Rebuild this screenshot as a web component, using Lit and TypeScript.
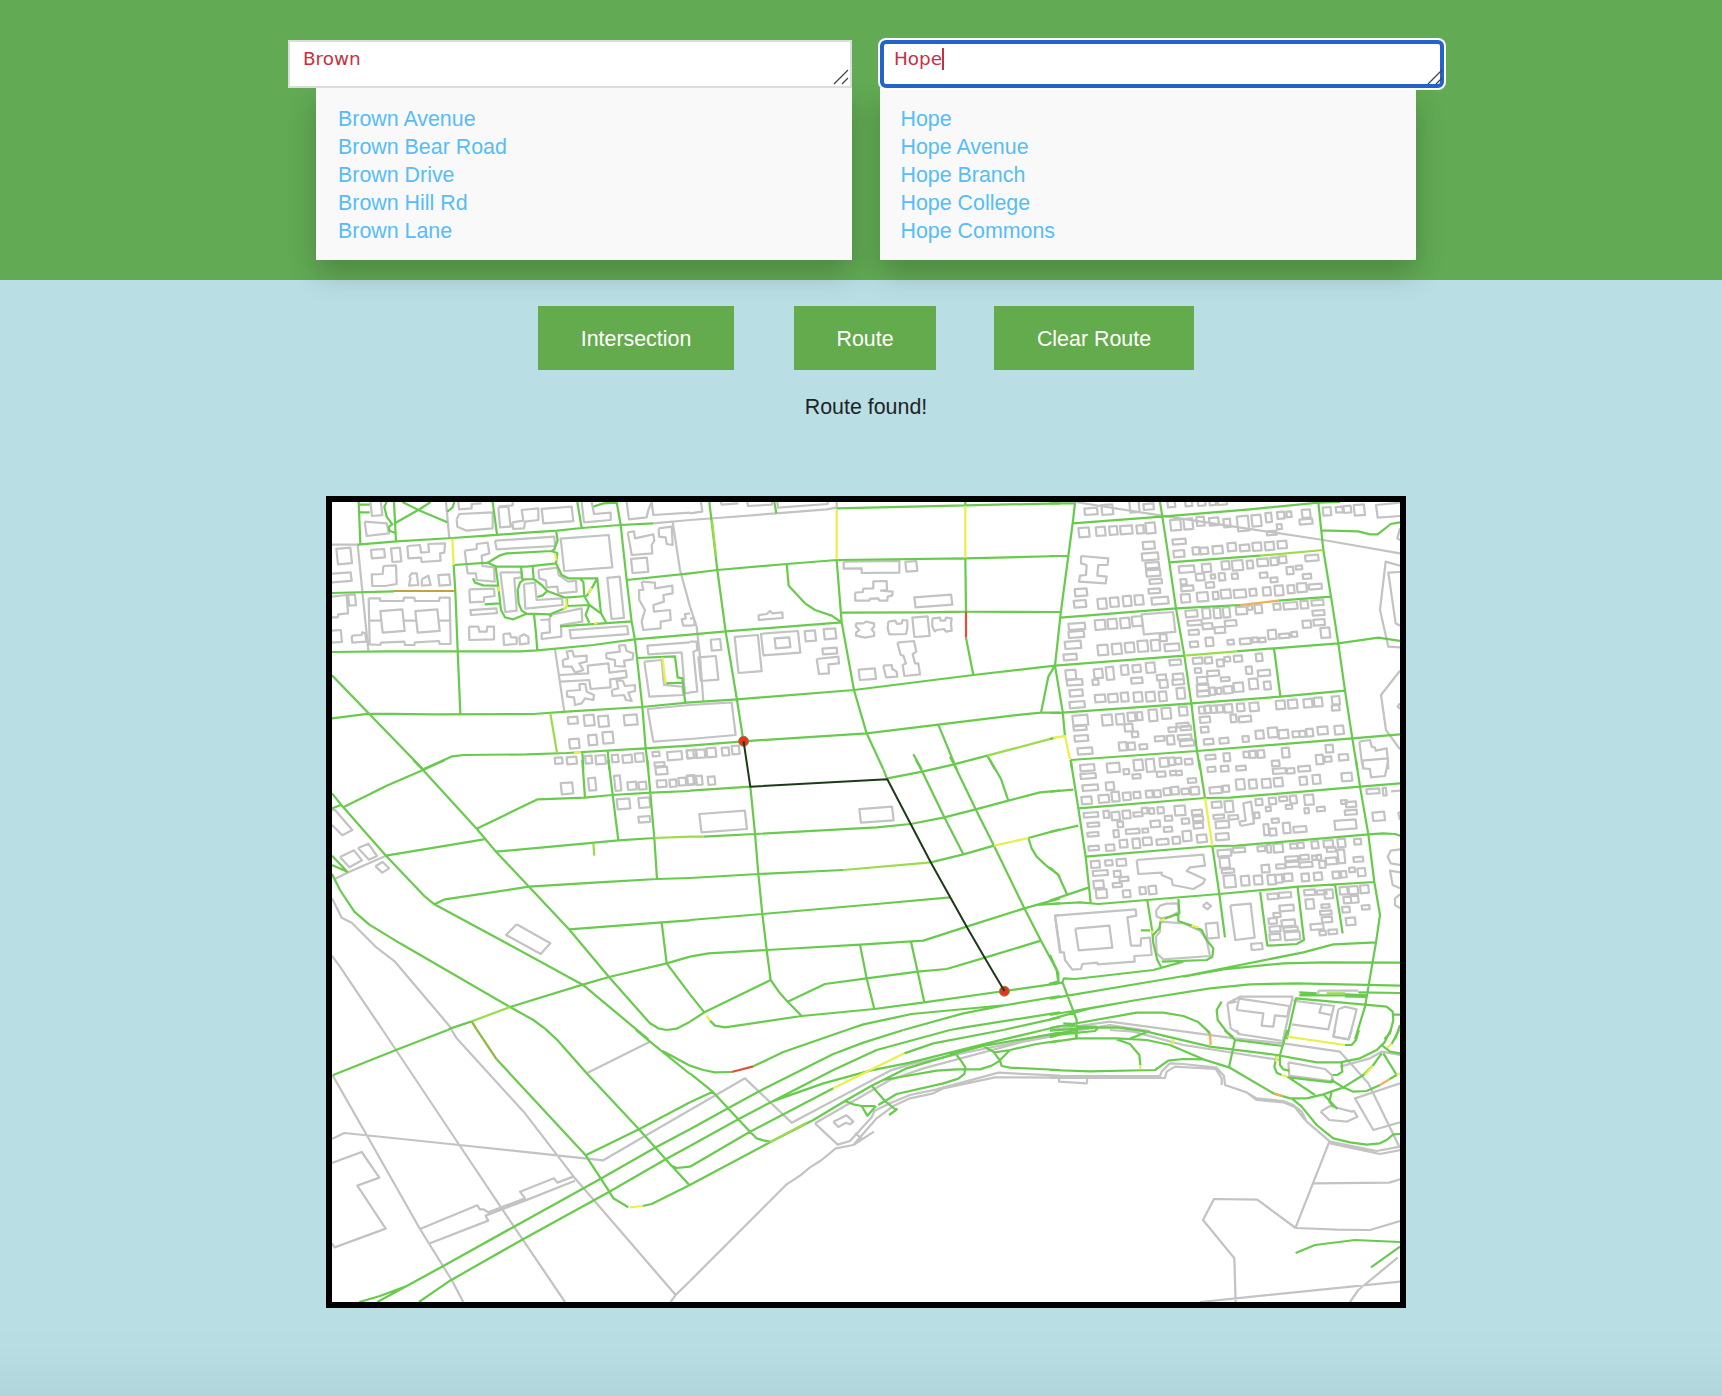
import { LitElement, html, svg, css } from "lit";
import { customElement, property } from "lit/decorators.js";

interface Tile {
  x: number;
  y: number;
  grey: string;
  boxes: string;
  green: string;
  lime?: string;
  yellow?: string;
  orange?: string;
  brown?: string;
  red?: string;
  olive?: string;
}

/* Map tiles. Coordinates inside a tile are in thirds of a pixel.
   Lines are point lists separated by ";", boxes are "x y w h" separated by ";". */
const TILES: Tile[] = [
  {
    x: 320, y: 490,
    green: `116,36 121,160;116,44 149,44;116,67 149,67;113,164 230,154 397,144 500,137 620,128 712,122 785,114 900,105 1000,100;
200,36 193,50 200,80 217,103 207,110 208,122 228,130;222,36 228,154;247,36 300,62 382,97;332,36 300,57 222,101;403,36 398,52 382,65;
401,225 406,304 413,482 421,670;36,309 222,304;36,486 200,484 413,484 600,484 652,481 820,465 943,448 1110,434;36,556 148,672 309,838;
36,685 148,671 340,673 640,672 740,665 965,651 1110,637;309,838 397,799 430,795 620,793 740,789 975,775 1110,767;518,36 531,133;772,36 785,114;
820,50 850,40 890,38;890,36 902,105 920,270 935,395 945,450 967,650 977,775 985,838;920,270 1110,250;
708,122 713,150 703,178 695,183 560,190 540,196 503,218 530,230 620,230 708,220 712,190 695,183;401,225 503,218;
708,220 725,255 745,265 832,265 815,295 800,318 735,323;832,267 843,370 858,397;720,409 935,394;780,267 790,275 793,318 808,345 843,370;
808,345 797,375 808,398;740,323 742,348 808,345;459,265 465,278 490,286 533,287;
527,230 535,290 543,360 555,382 580,388 620,371 690,373 735,355 742,345;494,343 538,340;603,230 607,268;638,230 641,267;
620,371 605,362 596,340 593,300 600,278 612,268 641,267 665,285 682,303 735,323;682,303 668,316 652,321;642,373 648,430 652,481;690,373 695,380;
953,504 1065,499 1073,562 1087,565 1096,640;1037,580 1087,578;787,785 790,838;863,783 868,838`,
    lime: `691,670 711,788`,
    yellow: `397,146 401,225;762,787 783,787;822,400 832,400;1027,502 1037,580;705,190 709,212;815,295 806,312;738,326 740,348 730,357;536,290 538,304`,
    brown: `222,303 405,303`,
    grey: `36,164 113,164 145,482;378,36 388,146;1058,95 1080,240 1110,350;1000,100 1110,90;705,478 733,665;
134,95 200,100 207,130 140,138 134,95;262,168 300,165 303,188 327,186 325,162 375,160 373,188 360,190 362,212 305,216 303,203 265,205 262,168;
190,228 228,226 230,282 195,288 157,288 155,253 188,252 190,228;267,262 275,250 290,250 295,285 267,287 272,262;305,268 325,257 332,285 306,287 305,268;
146,325 180,325 181,333 250,333 252,323 283,323 285,333 357,333 359,323 389,323 392,462 359,462 357,453 285,457 283,465 255,465 253,455 183,458 181,465 149,463 146,325;
150,392 181,392;254,392 286,392;359,392 390,392;36,320 80,315 84,370 55,373 53,382 36,382;95,437 125,435 127,427 136,430 139,455 97,458 95,437;
434,182 470,177 470,162 503,158 508,190 485,197 487,228 522,232 524,275 470,270 468,250 443,250 434,182;
448,298 522,296 524,318 492,322 492,335 450,337 448,298;447,410 475,410 478,425 500,425 502,410 522,410 522,448 448,450 447,410;
550,432 570,430 573,442 590,442 590,462 552,465 550,432;598,440 612,433 625,440 626,460 600,463 598,440;
541,247 605,247 605,262 583,265 590,362 556,366 541,247;612,282 645,278 650,330 726,325 728,345 616,356 612,282;
655,240 712,233 716,255 745,275 768,272 770,305 715,310 712,290 680,292 678,272 658,265 655,240;
661,390 690,388 690,375 785,355 787,395 723,405 724,440 665,447 665,430 690,427 688,390;525,152 703,140 705,168 530,178 525,152;
410,88 418,72 518,67 518,115 440,122 412,110 410,88;415,36 417,58 455,55 455,42 485,40;535,52 565,50 572,110 540,112 535,52;
577,97 610,92 605,60 655,55 655,90 615,95 612,115 580,117 577,97;785,36 792,97 872,90 872,68 822,72 815,36;
920,36 927,88 980,82 985,60 995,36 1000,75 1110,68;535,50 578,46 578,36;
923,127 942,124 945,145 1000,133 1003,152 995,165 997,190 935,195 930,165 923,127;1016,115 1055,110 1058,165 1040,162 1037,142 1017,140 1016,115;
965,275 1005,278 1005,295 1057,287 1058,310 1030,315 1032,335 1000,345 1002,365 1050,360 1052,390 1022,395 1022,415 970,420 965,395 975,360 958,330 957,300 970,300 965,275;
1110,370 1095,372 1097,385 1085,388 1090,407 1110,407;
728,510 745,505 740,485 757,482 762,500 800,497 800,515 778,520 790,540 765,548 755,530 730,530 728,510;
858,490 900,485 897,467 915,465 920,483 940,490 938,508 912,512 915,530 885,528 885,510 860,505 858,490;
740,603 780,600 778,582 796,582 800,605 822,615 820,630 795,625 785,640 765,645 762,622 742,620 740,603;
875,600 895,595 890,572 908,572 915,588 945,585 945,603 925,608 935,633 918,630 912,615 878,618 875,600;
720,555 805,550 803,527 865,520 868,548 918,542 920,562 870,568 872,592 812,597 808,570 722,575;1110,457 982,467 985,493 1085,487 1095,610 1110,608;
973,515 1025,510 1032,585 1087,590 1090,615 988,620 973,515;1110,645 983,657 1000,755 1110,747`,
    boxes: `49 173 47 50;30 247 65 30;153 177 42 28;213 173 31 43;355 253 36 34;151 30 36 48;722 135 155 108;862 260 50 127;933 203 52 46;743 680 31 22;791 674 33 34;834 677 33 34;911 673 42 33;747 746 32 30;804 734 28 32;847 725 34 36;704 802 24 20;740 800 31 23;795 797 22 24;826 795 32 28;875 794 21 23;907 794 30 25;944 789 28 27;997 785 22 14;1041 783 46 28;1100 779 30 26;181 358 73 70;286 358 73 70;30 420 36 38;451 355 80 20;84 313 24 34;665 50 95 50;749 408 176 37;1003 816 31 14`,
  },
  {
    x: 690, y: 490,
    green: `58,36 82,240 107,425 141,630 160,752;0,250 82,240 290,222 440,210 826,205 1110,198;253,36 259,70;440,55 826,46 1110,40;826,36 826,46;
440,210 455,397 492,600 530,730 580,838;290,222 296,287 345,340 375,360 425,377 455,397;455,368 700,367 826,365 1110,366;826,205 828,365;828,443 850,555;
0,434 107,424 455,397;0,637 141,628 492,600 850,555 1095,527;0,767 160,754 530,730 745,704 1000,673 1053,668 1110,668;1095,527 1075,560 1053,668;
745,704 800,838;670,793 695,838;792,823 892,797;892,797 915,838`,
    lime: `66,90 78,200;892,797 1095,743`,
    yellow: `440,58 440,208;826,47 826,203;1095,743 1125,738`,
    red: `828,365 828,443`,
    grey: `0,90 82,84 259,70 410,58 440,53 440,36;0,350 20,410 30,500 40,635;461,215 628,213 628,248 515,249 515,235 461,236 461,215;
205,375 230,372 240,363 247,370 277,367 278,384 207,390 205,375;380,507 445,500 447,520 415,523 417,550 387,552 380,507;
495,308 518,306 520,296 550,295 550,274 590,273 591,300 573,302 608,305 607,316 593,320 592,332 568,332 565,325 540,326 538,332 496,332 495,308;
497,400 520,400 528,395 552,400 552,410 545,418 553,428 552,438 525,443 498,437 498,428 508,420 498,410 497,400;
595,395 615,392 622,402 635,400 638,390 652,392 652,415 648,432 598,433 593,415 595,395;
727,385 750,383 752,392 765,392 768,383 785,385 783,400 785,422 768,425 762,417 740,420 735,424 727,410 727,385;
622,458 672,453 679,485 668,492 675,520 685,520 690,553 643,558 638,525 648,520 640,497 632,495 622,458;580,527 605,525 607,537 620,545 622,560 588,562 580,527;
0,645 125,637 137,735 0,747;92,36 95,44 145,40;172,36 174,48 246,44 246,36;262,36 264,53 413,42 413,36;0,70 37,65 33,36;0,455 20,455 22,480 10,485 22,605 0,607;0,385 12,385 14,405 0,407`,
    boxes: `646 213 36 32;673 314 114 38;667 379 52 62;62 447 32 35;134 435 81 114;254 442 47 33;344 421 34 33;401 415 38 33;397 473 45 20;506 535 52 35;213 423 118 73;25 498 60 75;-10 780 22 25;18 778 28 26;49 773 30 29;95 772 23 25;125 767 24 26`,
  },
  {
    x: 1050, y: 490,
    green: `0,40 75,40 68,100 55,198 32,370 15,527 38,665 45,740;62,810 66,838;68,100 335,80 600,58 805,38 870,36;0,198 55,198;0,366 32,366;
330,36 337,80 358,217 378,355 403,497 424,640 441,783 450,838;358,217 630,197;32,383 378,355 570,345;685,332 843,320;
805,38 820,180 843,320 865,460 885,602 907,745 922,838;15,527 403,497;560,484 672,475 865,460 985,443 1050,453;
815,121 925,124 960,133 983,133 1022,102 1050,97;672,475 691,618;0,669 38,668 424,640 691,620 885,602;0,748 10,744;62,810 441,783 907,745 1050,733`,
    lime: `630,197 820,180;403,497 560,484`,
    yellow: `10,744 45,738 60,808`,
    orange: `570,345 685,332`,
    grey: `75,36 335,77 820,150 1050,190;1050,227 1007,215 990,360 1015,470 1050,472;1050,246 1015,248 1037,400 1050,407;1050,542 993,615 1008,720 1050,778;1050,115 1042,145 1050,150;1050,38 978,45 983,83 1050,78;1050,640 1043,650 1050,657;
93,198 175,205 173,225 145,225 142,257 170,260 167,280 87,275 90,257 108,255 110,225 93,220 93,198;928,755 960,750 965,770 975,773 977,782 1010,775 1013,805 935,812 928,755;935,812 940,838;1013,805 1015,838`,
    boxes: `103 53 40 22;154 43 36 32;237 26 32 42;280 40 32 20;352 32 24 20;405 30 22 19;443 30 24 18;478 30 20 16;503 30 28 15;85 112 34 30;137 110 30 28;177 108 26 27;210 106 38 27;259 105 23 26;286 97 31 34;360 88 34 34;400 85 30 34;439 80 25 28;477 82 30 25;520 86 22 26;560 77 38 47;604 74 31 36;646 68 20 29;681 65 23 22;709 64 16 18;755 58 27 26;748 86 40 18;680 102 16 16;650 122 30 14;818 51 26 26;857 50 22 18;880 47 24 22;911 43 34 34;
278 154 37 24;275 187 51 25;286 216 42 20;288 238 44 22;298 266 38 16;295 295 36 16;74 295 38 24;71 330 38 23;142 325 29 32;179 322 28 29;218 317 27 32;253 315 28 30;304 320 52 24;367 146 41 18;370 180 34 22;427 171 22 23;450 172 25 21;487 167 32 25;532 158 27 26;569 163 30 21;607 157 28 26;644 155 29 26;682 152 29 24;
386 226 48 23;455 221 29 26;514 213 25 26;545 210 35 32;590 211 20 25;621 205 34 24;661 202 23 24;686 198 24 22;765 194 41 20;391 267 19 17;393 286 38 18;437 250 27 22;482 253 14 13;506 249 20 23;467 276 26 18;545 250 19 17;629 247 24 17;661 262 22 15;709 230 22 23;737 226 20 13;758 251 26 16;392 312 29 26;440 306 35 29;488 305 18 23;512 298 31 28;551 298 38 26;598 296 22 22;638 291 25 26;673 286 28 31;712 285 22 25;740 279 31 28;776 281 40 18;
406 360 37 22;456 354 26 32;490 353 23 32;518 351 23 32;557 349 35 25;592 346 15 14;613 343 24 27;670 340 22 20;700 336 43 23;751 332 24 24;784 329 37 18;787 360 37 17;790 387 35 20;757 391 27 23;811 412 30 32;412 390 44 17;416 419 31 16;457 399 31 19;493 410 33 20;524 390 36 19;419 454 26 18;466 442 25 27;532 449 20 15;569 444 34 19;607 442 17 15;627 443 20 14;653 419 27 29;687 430 32 15;724 425 18 16;275 366 101 67;
55 398 51 22;55 422 48 22;44 452 50 25;40 491 41 20;134 389 33 31;172 386 30 31;210 383 30 32;245 378 33 31;142 464 33 32;185 460 31 33;224 457 30 31;262 451 33 35;302 449 29 34;343 460 46 24;329 432 22 22;46 539 33 30;50 567 48 20;58 598 41 22;58 633 47 22;131 536 28 29;167 530 26 40;127 568 19 17;212 525 24 30;247 524 26 23;287 517 29 32;358 508 36 18;243 562 35 19;320 553 29 18;328 569 26 25;368 550 33 20;367 567 36 18;379 593 27 34;134 613 33 24;174 611 30 26;212 607 24 28;250 606 28 30;287 605 29 30;326 604 25 30;
428 502 30 20;464 501 23 20;500 508 22 22;523 500 18 15;551 496 26 20;617 490 21 24;434 534 20 15;471 541 37 18;587 529 20 23;623 539 38 20;440 560 33 22;512 561 27 13;440 583 37 20;441 602 37 18;478 592 18 23;499 593 16 19;520 588 28 23;550 577 31 29;596 565 29 33;641 574 22 25;
67 674 48 33;70 706 40 16;73 735 42 20;82 772 46 22;155 673 33 34;197 671 27 33;232 667 25 27;260 666 18 25;295 658 28 36;334 653 30 34;386 649 27 28;223 701 26 24;245 724 20 18;355 711 24 15;379 698 38 14;391 707 33 14;206 756 25 26;233 757 23 23;268 762 24 16;314 738 30 16;350 736 24 28;383 733 42 16;389 750 44 19;
446 649 18 22;464 646 18 24;482 646 18 23;500 645 20 23;522 642 26 26;560 640 24 24;598 637 29 27;677 631 29 27;713 628 30 28;760 626 28 27;791 622 27 28;845 618 25 26;845 645 24 17;449 679 32 20;452 710 24 18;541 673 19 24;566 677 38 20;461 746 30 18;508 743 28 18;577 738 20 18;616 721 26 26;653 712 31 31;685 719 31 27;727 723 22 19;747 722 20 19;768 716 22 24;802 709 32 25;853 706 29 28;
466 794 31 15;520 789 21 25;580 784 18 19;598 782 20 22;622 780 22 24;695 773 24 30;665 811 24 18;797 794 24 29;823 799 22 17;826 764 24 24;866 792 29 20;250 808 30 34;287 806 28 40;328 803 28 28;355 802 20 24;375 803 20 20;404 806 24 18`,
  },
  {
    x: 320, y: 760,
    green: `375,0 309,30 200,77 70,142;280,0 309,30 470,206 528,275 627,380 747,508 867,651 990,790 1015,805 1040,810 1070,806 1110,785;
36,100 70,142 198,287 315,410 343,433 560,550 788,674 985,838;36,145 62,135;470,206 653,118 795,113 875,105 995,98 1110,93;198,287 492,238;
528,275 800,250 895,241 1003,234;787,0 795,113;865,0 895,241;982,0 1003,234 1011,357;343,433 375,418 627,380 835,367 1011,357 1110,354;
747,508 1025,487 1110,481;1025,487 1040,610 1110,703;36,342 60,390 103,455 148,494 240,550 570,741 640,780 675,806;
383,810 390,806 455,784;570,741 788,674 867,651 1040,610 1110,590;36,287 82,335 36,315`,
    lime: `1003,234 1110,230;820,250 823,287;455,784 570,741`,
    olive: `455,784 470,808`,
    grey: `45,357 82,338 198,287;36,415 65,473 95,488 170,563 225,605 390,800 395,810;36,588 60,620 100,680 188,810;36,195 67,226 97,210 45,150 36,150;
60,291 102,271 126,301 88,322 60,291;114,264 145,251 171,288 147,299 114,264;166,319 188,306 207,325 187,338 166,319;590,493 691,550 662,582 558,525 590,493`,
    boxes: `722 67 38 36;804 53 25 39;882 46 22 47;922 65 28 25;955 65 25 24;890 115 41 33;955 112 36 32;955 168 36 20;1006 20 37 24;1010 60 30 22;1048 58 22 23;1075 53 24 24;1101 45 25 30`,
  },
  {
    x: 690, y: 760,
    green: `0,92 181,80 195,220 205,342 217,462 230,570 242,660 270,700 293,725 335,768;580,28 592,58;592,55 697,35 792,13;678,0 697,35 763,172 820,283;
792,13 857,148 912,257 1003,445 1053,542 1100,630 1105,668;780,-10 792,13;900,0 933,57 955,122;40,230 195,222 560,202 662,192 763,172 857,148 955,122 1050,97 1110,92;
0,354 205,342 460,330;722,307 820,283 912,257;1015,234 1110,208;1015,234 1025,265 1040,290 1070,318 1100,340 1110,350;0,480 217,462 560,432 780,412;
0,590 55,580 230,570 510,554 700,542 830,500 1003,445 1110,415;1040,435 1110,430;510,554 530,655 553,747;663,545 683,635 703,727;
293,725 405,672 530,655 683,635 770,627 885,593 1053,542;242,660 43,757 0,785;0,703 43,757;60,782 75,797 105,802 335,768 553,747 703,727 943,693 1105,670;
470,810 520,793 665,762 950,735 1110,708;640,810 820,760 950,735;780,810 820,803 1110,757;940,810 1110,772;1060,810 1110,798`,
    lime: `0,230 40,230;460,330 722,307`,
    yellow: `912,257 1015,234;50,768 60,782`,
    grey: `1110,465 1095,467 1110,580`,
    boxes: `-10 47 22 27;18 47 20 28;53 49 23 26;28 152 143 65;508 140 103 48`,
  },
  {
    x: 1050, y: 760,
    green: `62,0 85,145 107,290 122,428;0,95 70,89;85,145 465,114 540,113 930,80 1050,70;0,216 85,197;107,290 487,258 560,257 955,223 1000,220 1035,222 1050,227;
447,0 465,114;487,258 508,402 525,532;918,0 930,80 955,223 973,366 990,465 978,547 945,740 915,838;0,432 90,427 145,432 508,402 745,380 973,366;
0,323 25,345 52,405;0,422 115,383;292,422 307,515 310,550 322,600 333,620;273,511 300,511;385,413 388,460 333,480 328,505 310,525;
385,460 385,483 425,497 455,510 470,540 490,565 487,590 470,600 335,605;630,392 652,557 740,552 762,540 743,382;855,373 878,520;
0,585 25,640 25,665 12,668 0,671 36,668 42,655 75,657 310,630 400,605;38,668 80,780 80,838;
0,716 420,645 760,577 850,553 978,547;400,650 520,628 700,610 820,607 1050,608;0,765 260,720 480,685 600,673 740,670 1050,677;0,778 120,745 260,720;
0,804 260,758 340,758 400,768 443,785 478,817;515,725 500,750 503,780 530,815 550,832;710,838 738,715 1010,740 1028,755 1030,780 1020,820 1003,838;
748,697 800,700;748,706 950,706;750,701 800,703;885,703 950,706;885,709 950,711;925,697 1050,699;1028,764 1050,764;1050,795 1035,838;
40,790 75,792;40,797 75,797;0,812 130,803 200,802 290,815;80,800 138,800 142,806 135,813 60,820 0,828;240,836 290,817`,
    yellow: `465,114 487,258;425,497 445,502;303,512 310,520;330,482 345,477`,
    lime: `830,700 885,700`,
    orange: `480,818 480,838`,
    grey: `0,810 180,785 560,836;0,823 60,815 180,795 300,813;260,300 460,284 465,317 420,322 410,333 465,358 460,370 430,387 368,375 365,358 335,345 335,338 265,342 260,300;
15,467 257,448 259,467 232,472 243,557 272,557 273,535 300,533 305,585 253,588 254,605 143,613 142,608 97,612 93,627 67,629 45,600 42,577 32,577 15,467;
76,506 178,497 187,563 86,571 76,506;318,452 330,437 350,431 383,430 387,455 360,470 335,475 320,470 318,452;
330,485 400,490 450,512 470,540 480,588 340,598 320,580 318,530 330,515 330,485;541,436 602,431 614,533 556,540 541,436;458,438 470,428 483,438 473,448 458,438;
532,730 570,710 728,710 700,838;532,730 542,805 570,822;532,730 560,725;560,750 567,716 718,738 712,770 675,766 670,800 635,797 640,760 560,750;
730,722 852,738 835,808 725,793;815,735 808,758 845,765;865,748 885,740 920,748 897,838 850,830 865,748;937,0 940,25 960,27 963,52 1005,48 1015,0;
805,692 925,692;805,692 805,702;1050,268 1022,272 1013,290 1022,310 1050,315;1050,337 1020,332 1028,375 1050,385;1050,403 1035,415 1035,435 1050,445;
572,198 568,185 587,182 580,130 603,125 612,190 572,198;1023,94 1050,92;1050,155 1045,160 1050,180`,
    boxes: `90 12 44 22;91 39 47 18;97 73 48 20;167 66 26 25;94 109 32 24;145 104 33 25;184 95 25 30;218 97 25 24;250 95 22 20;287 91 22 22;311 90 22 22;340 84 22 22;363 80 24 24;394 85 24 18;421 80 27 24;413 54 26 15;170 8 40 30;220 27 18 16;247 42 25 14;320 34 27 17;360 32 19 14;378 32 18 14;472 20 25 16;512 17 24 18;558 17 30 15;478 80 38 21;518 76 20 20;557 57 28 32;596 58 25 28;635 56 28 28;671 53 28 27;668 24 40 18;710 24 24 17;744 17 37 18;748 50 24 25;787 44 25 28;874 38 33 26;949 85 40 17;998 83 12 24;967 155 38 28;
101 156 44 17;112 187 36 14;112 216 34 14;115 257 32 15;160 152 18 22;184 155 26 26;217 151 25 25;250 156 28 14;275 143 18 18;297 144 16 18;322 141 20 20;373 136 34 31;344 167 23 16;395 175 23 17;301 181 30 21;202 184 18 18;190 210 17 22;227 206 42 16;277 205 18 13;341 200 26 16;425 149 32 16;428 168 32 16;430 188 30 18;167 253 27 20;208 239 25 24;247 235 24 30;278 232 28 24;319 236 37 19;367 230 24 22;397 212 28 32;440 223 31 25;
485 124 30 20;523 122 28 35;490 163 33 14;496 182 42 23;497 219 40 22;535 165 30 14;616 116 22 20;656 113 23 20;687 109 25 15;719 106 22 25;762 103 30 32;647 140 16 14;613 157 16 18;665 175 22 14;707 134 20 13;763 144 14 16;800 140 25 14;640 192 18 34;658 205 22 22;698 188 24 32;730 198 40 20;887 124 32 18;884 149 37 16;873 120 18 12;853 178 67 32;
122 302 28 22;128 330 46 18;130 361 32 24;137 387 35 28;165 300 23 17;199 296 30 22;191 332 22 19;208 350 28 14;188 368 28 14;218 390 24 22;268 381 20 22;295 377 25 26;
502 268 42 22;548 262 38 16;508 292 32 32;515 326 38 14;520 345 38 38;572 347 27 30;611 346 27 28;652 344 26 30;676 343 22 26;701 340 27 24;754 340 24 24;791 337 26 24;847 334 22 22;872 333 18 20;922 324 25 25;634 314 25 24;622 258 24 16;650 254 14 24;670 250 30 28;720 250 22 16;742 247 20 18;784 243 22 23;820 240 30 22;862 236 25 26;912 236 22 18;705 288 40 15;678 312 28 14;706 304 42 18;748 305 40 18;750 284 27 15;786 286 14 14;800 284 14 16;807 302 20 22;827 292 34 22;862 268 24 42;910 290 30 16;830 262 28 14;897 322 18 15;
652 400 33 18;686 396 38 18;688 434 44 20;670 458 22 14;655 474 26 18;694 478 42 22;658 498 34 18;658 521 34 20;703 514 48 27;700 500 44 14;603 549 35 21;467 488 40 48;762 388 34 18;766 417 27 30;800 390 30 14;822 388 28 28;814 432 25 12;810 451 35 14;815 470 32 18;781 490 40 20;808 512 20 14;835 508 27 15;868 380 26 24;895 378 30 25;930 375 27 25;880 410 24 20;902 407 24 22;876 440 24 18;887 472 30 24;935 435 24 14`,
  },
  {
    x: 320, y: 1030,
    green: `383,0 228,60 38,136;530,88 797,376 868,485 880,505 925,532;968,528 995,522 1105,467;675,-4 710,28 800,130 957,298 1037,388 1110,467;
948,0 990,35 1110,132;1028,63 1110,107;797,376 957,298 1110,217;1110,298 1005,353 842,446 582,590 370,708 260,768 172,816;
1110,348 1037,388 868,485 605,630 390,752 297,816;118,816 180,798 260,768;1050,405 1070,414 1110,410`,
    yellow: `930,532 968,528`,
    olive: `470,-2 530,88`,
    grey: `188,0 228,60 418,345 545,535 735,816;395,0 410,25 615,250 765,445 1067,795;1110,753 1067,795 1052,816;38,136 140,315 300,597 395,750 430,816;
36,327 73,309 418,345 850,391 975,318 1110,240;36,399 125,366 178,443 112,467 197,596 44,652 36,640;800,130 990,35;
300,597 472,526 480,538 490,538 505,547 615,505 600,485 702,445 712,458 760,440;330,640 505,572 497,557 615,512 765,452`,
    boxes: ``,
  },
  {
    x: 690, y: 1030,
    green: `0,107 40,120 75,127 125,126;190,109 280,66 470,0;0,298 110,237 205,185 430,72 520,38 640,0;0,348 145,268 245,215 430,120 560,60 780,0;
0,410 180,305 430,175;643,70 730,40 940,0;240,337 370,270 465,213 545,167 650,115 800,70;-5,467 240,337;
245,215 400,160 540,122 660,98 900,38 1060,0;780,74 880,48 1110,8;0,130 68,185 180,305 200,325 220,331 240,335;0,217 68,185;
465,213 490,223 515,228 555,228;515,228 532,257 558,228;565,225 620,192 760,160 805,146 823,132 826,112 815,95 800,75;
545,167 585,213 618,240 597,255;618,240 622,235;580,150 740,122 800,118 870,118 905,107 925,95 960,60;
880,48 910,65 930,92 935,108 960,113 1110,120;910,68 960,60 1040,42 1110,32`,
    lime: `240,337 350,278`,
    yellow: `430,175 643,70`,
    red: `125,126 190,109`,
    grey: `0,240 165,145 305,278 600,122 660,103 850,63 1110,10;375,280 600,150 700,115 1000,35 1110,15;375,280 443,344 480,333 545,262 553,243 600,220 660,195 740,178 925,128 1110,137;
0,753 290,463 330,437 360,412 395,390 437,355 490,345 560,265 610,228 660,205 730,190 760,175 915,142 1110,143;490,345 552,305;495,310 515,325;
430,275 470,256 490,275 480,283 468,278 445,291 430,275`,
    boxes: ``,
  },
  {
    x: 1050, y: 1030,
    green: `0,37 80,25 200,25 290,30 360,45 460,88 537,112 670,190 720,205 770,205 820,193 880,172 940,135 970,105 995,70;
290,5 480,50 680,75 800,97 870,97 930,85 980,60 1003,38 1022,0;555,30 537,112;523,0 555,30 700,48;712,0 690,75 690,105 700,118 718,122;
885,45 905,45 918,30 927,0;680,75 673,110 680,128 695,135;712,140 795,195;715,142 845,157 845,150 880,172 910,185 950,183 990,165;
1018,148 1040,135 1000,70;875,97 877,125 862,135 848,135;200,28 240,42 268,75 271,105;0,120 120,124 315,120 355,92 400,87 460,88;
725,205 755,230 800,285 850,325 900,337 950,344 990,340 1010,330 1030,313 1050,312;820,193 862,237;845,185 838,215 850,230;
737,669 795,645 915,630 1050,636;963,712 1050,650;995,45 1020,65 1050,70;1025,42 1047,0;470,0 480,12;0,15 80,0;0,22 40,8 80,10;80,0 78,24`,
    yellow: `712,20 885,45;680,78 678,95;695,136 712,138;1040,135 1050,130;271,105 271,118;1012,52 1025,42;365,45 370,28;945,135 968,108`,
    orange: `990,165 1018,148;672,192 700,198;480,10 482,45`,
    grey: `0,138 330,138 335,125 360,100 400,102 500,113 522,138 525,165 590,187 620,205 700,213 730,225 755,245 770,275 840,335;
0,144 345,144 350,125 375,110 497,117 515,145 515,165;590,187 620,210 700,217 735,232 765,270;27,143 27,155 110,160 112,147;
840,335 980,363 1050,350;840,340 990,372 1050,360;838,335 737,592;790,460 1018,458 1050,448;737,594 862,599 960,600 1050,573;
737,594 622,509 492,507 459,570 553,685 557,816;450,816 1050,755;900,816 925,780 1043,683;180,0 250,5 400,45 690,90;560,26 700,40 870,65 955,160 1048,350;
870,110 960,85 995,65 1050,75;1050,160 915,205 970,300 1050,277;715,97 825,117 845,135 850,155 718,137 715,97;
812,245 840,228 905,245 912,243 922,260 890,275 838,270 812,245;560,0 565,12 700,33 705,0;850,20 895,28 905,0;850,20 855,0`,
    boxes: ``,
  },
];

const linePath = (lines = "") =>
  lines
    .split(";")
    .map((l) => l.trim())
    .filter(Boolean)
    .map((l) => "M" + l.split(" ").join("L"))
    .join("");

/* Buildings lean slightly with the street grid. */
const boxPath = (boxes: string) =>
  boxes
    .split(";")
    .filter((b) => b.trim())
    .map((b) => {
      const [x, y, w, h] = b.trim().split(" ").map(Number);
      const a = w * 0.07;
      const c = h * 0.1;
      return `M${x} ${y + a}L${x + w - c} ${y}L${x + w} ${y + h - a}L${x + c} ${y + h}Z`;
    })
    .join("");

const KINDS = ["green", "lime", "olive", "yellow", "orange", "brown", "red"] as const;

@customElement("route-map")
export class RouteMap extends LitElement {
  static styles = css`
    :host { display: block; box-sizing: border-box; width: 1080px; height: 812px; border: 6px solid #000; background: #fff; }
    svg { display: block; width: 1068px; height: 800px; }
    path { fill: none; stroke-width: 6.7; stroke-linejoin: round; }
    .grey { stroke: #c3c3c3; }
    .green { stroke: #69cb4d; }
    .lime { stroke: #9bdc4a; }
    .olive { stroke: #8fb93c; }
    .yellow { stroke: #e9f04a; }
    .orange { stroke: #eeb052; }
    .brown { stroke: #c4a43a; }
    .red { stroke: #d9553a; }
    .route { stroke: #1d3a18; stroke-width: 2; }
    .pin { fill: #e63323; stroke: #85913a; stroke-width: 1; }
  `;

  render() {
    const tile = (t: Tile, body: unknown) =>
      svg`<g transform="translate(${t.x} ${t.y}) scale(0.33333)">${body}</g>`;
    return html`<svg viewBox="332 502 1068 800">
      ${TILES.map((t) => tile(t, svg`<path class="grey" d=${linePath(t.grey) + boxPath(t.boxes)}></path>`))}
      ${TILES.map((t) => tile(t, KINDS.map((k) => (t[k] ? svg`<path class=${k} d=${linePath(t[k])}></path>` : ""))))}
      <circle class="pin" cx="743.6" cy="741.3" r="5"></circle>
      <circle class="pin" cx="1004.4" cy="991.2" r="5"></circle>
      <path class="route" d="M743.6 741.3L750.3 786.7L887.3 779.3L910.7 824L930.7 862.3L966.7 926.7L985 958.3L1004.4 991"></path>
    </svg>`;
  }
}

@customElement("street-field")
export class StreetField extends LitElement {
  @property() value = "";
  @property({ type: Array }) suggestions: string[] = [];
  @property({ type: Boolean, reflect: true }) active = false;

  static styles = css`
    :host { display: flex; flex-direction: column; width: 564px; }
    .box {
      position: relative; box-sizing: border-box; width: 564px; height: 48px; padding: 5px 13px 0;
      display: flex; align-items: flex-start; background: #fff; border: 2px solid #ddd;
      color: #c9303f; font: 18.4px/24px "DejaVu Sans", Verdana, sans-serif;
    }
    .caret { width: 2px; height: 22px; margin-top: 1px; background: #c9303f; }
    .grip { position: absolute; right: 1px; bottom: 1px; width: 16px; height: 16px; fill: none; stroke: #444; stroke-width: 1.3; }
    .list {
      box-sizing: border-box; width: 536px; height: 172px; margin-left: 28px; padding: 17px 21px 15px 22px; background: #f9f9f9;
      box-shadow: 0 14px 28px rgba(0, 0, 0, 0.2);
    }
    .item { height: 28px; line-height: 28px; color: #56bdf8; }
    :host([active]) .box { z-index: 1; border: 4px solid #2463cb; border-radius: 6px; padding: 3px 10px 0; box-shadow: 0 0 0 2px #fff; }
    :host([active]) .grip { right: -3px; bottom: -1px; }
    :host([active]) .list { margin-left: 0; padding-left: 20.5px; }
  `;

  render() {
    return html`
      <div class="box">
        <span>${this.value}</span>${this.active ? html`<span class="caret"></span>` : ""}
        <svg class="grip" viewBox="0 0 16 16"><path d="M1 15L15 1M9 15L15 9"></path></svg>
      </div>
      <div class="list">${this.suggestions.map((s) => html`<div class="item">${s}</div>`)}</div>
    `;
  }
}

@customElement("app-root")
export class AppRoot extends LitElement {
  static styles = css`
    :host {
      display: block; width: 1722px; height: 1396px; overflow: hidden;
      background: linear-gradient(#b9dfe4 0, #b9dfe4 1325px, #b7dde2 1355px, #b0d6db 1396px);
      font-family: "Liberation Sans", Arial, sans-serif; font-size: 21.4px; color: #1f2426;
    }
    .header { box-sizing: border-box; height: 280px; padding: 40px 0 0 288px; display: flex; gap: 28px; background: #62aa54; }
    .main { padding-left: 10px; display: flex; flex-direction: column; align-items: center; }
    .buttons { display: flex; margin-top: 26px; gap: 58px; }
    button { box-sizing: border-box; height: 64px; padding: 2px 0 0; border: 0; background: #64ab4d; color: #fff; font: inherit; }
    .intersection { width: 196px; margin-right: 2px; }
    .route { width: 142px; }
    .clear { width: 200px; }
    .status { margin: 25px 0 0; height: 24px; line-height: 25px; }
    route-map { margin-top: 77px; }
  `;

  render() {
    return html`
      <div class="header">
        <street-field
          value="Brown"
          .suggestions=${["Brown Avenue", "Brown Bear Road", "Brown Drive", "Brown Hill Rd", "Brown Lane"]}
        ></street-field>
        <street-field
          value="Hope"
          active
          .suggestions=${["Hope", "Hope Avenue", "Hope Branch", "Hope College", "Hope Commons"]}
        ></street-field>
      </div>
      <div class="main">
        <div class="buttons">
          <button class="intersection">Intersection</button>
          <button class="route">Route</button>
          <button class="clear">Clear Route</button>
        </div>
        <p class="status">Route found!</p>
        <route-map></route-map>
      </div>
    `;
  }
}
